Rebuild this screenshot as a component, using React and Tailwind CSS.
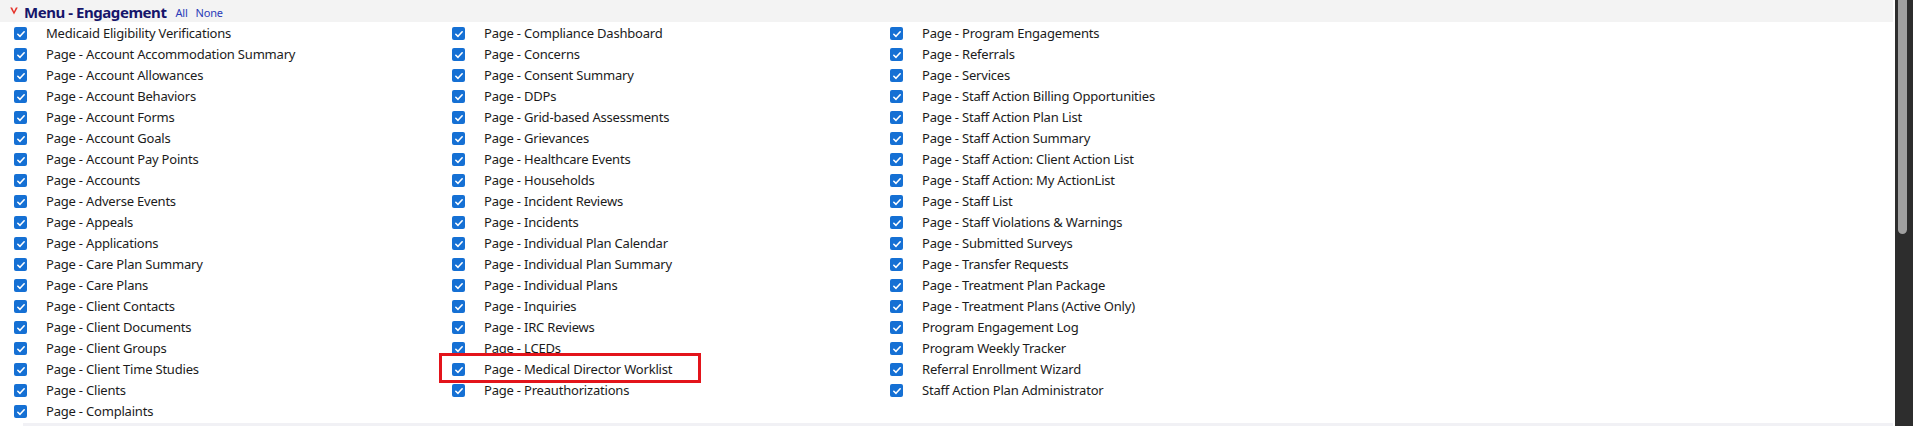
import React from "react";

const columns = [
  [
    "Medicaid Eligibility Verifications",
    "Page - Account Accommodation Summary",
    "Page - Account Allowances",
    "Page - Account Behaviors",
    "Page - Account Forms",
    "Page - Account Goals",
    "Page - Account Pay Points",
    "Page - Accounts",
    "Page - Adverse Events",
    "Page - Appeals",
    "Page - Applications",
    "Page - Care Plan Summary",
    "Page - Care Plans",
    "Page - Client Contacts",
    "Page - Client Documents",
    "Page - Client Groups",
    "Page - Client Time Studies",
    "Page - Clients",
    "Page - Complaints",
  ],
  [
    "Page - Compliance Dashboard",
    "Page - Concerns",
    "Page - Consent Summary",
    "Page - DDPs",
    "Page - Grid-based Assessments",
    "Page - Grievances",
    "Page - Healthcare Events",
    "Page - Households",
    "Page - Incident Reviews",
    "Page - Incidents",
    "Page - Individual Plan Calendar",
    "Page - Individual Plan Summary",
    "Page - Individual Plans",
    "Page - Inquiries",
    "Page - IRC Reviews",
    "Page - LCEDs",
    "Page - Medical Director Worklist",
    "Page - Preauthorizations",
  ],
  [
    "Page - Program Engagements",
    "Page - Referrals",
    "Page - Services",
    "Page - Staff Action Billing Opportunities",
    "Page - Staff Action Plan List",
    "Page - Staff Action Summary",
    "Page - Staff Action: Client Action List",
    "Page - Staff Action: My ActionList",
    "Page - Staff List",
    "Page - Staff Violations & Warnings",
    "Page - Submitted Surveys",
    "Page - Transfer Requests",
    "Page - Treatment Plan Package",
    "Page - Treatment Plans (Active Only)",
    "Program Engagement Log",
    "Program Weekly Tracker",
    "Referral Enrollment Wizard",
    "Staff Action Plan Administrator",
  ],
];

const HIGHLIGHT = "Page - Medical Director Worklist";

function Check() {
  return (
    <span className="flex h-[13px] w-[13px] shrink-0 items-center justify-center rounded-[2px] bg-[#1570d4]">
      <svg viewBox="0 0 12 12" className="h-[10px] w-[10px]" fill="none">
        <path d="M2.2 6.3 L4.8 8.8 L9.8 3.4" stroke="#fff" strokeWidth="1.9" strokeLinecap="round" strokeLinejoin="round" />
      </svg>
    </span>
  );
}

function Row({ label }) {
  return (
    <div className="relative flex h-[21px] items-center">
      <Check />
      <span className="ml-[19px] whitespace-nowrap text-[13px] leading-none tracking-[-0.2px] text-[#1b1b1b]">{label}</span>
      {label === HIGHLIGHT && (
        <div className="pointer-events-none absolute left-[-13px] top-[-6px] h-[30px] w-[262px] border-[3px] border-[#e3141b]" />
      )}
    </div>
  );
}

export default function App() {
  return (
    <div className="flex h-[426px] w-[1913px] overflow-hidden bg-white" style={{ fontFamily: '"Segoe UI", "Noto Sans", "Open Sans", sans-serif' }}>
      <div className="flex min-w-0 flex-1 flex-col">
        <div className="flex h-[22px] w-[1893px] items-center bg-[#f3f3f3] pl-[10px] pt-[2px]">
          <svg viewBox="0 0 8 8" className="mt-[-2px] h-[8px] w-[8px]">
            <path d="M0.2 0.6 L4 7.6 L7.8 0.6 L5.9 0.6 L4 4.4 L2.1 0.6 Z" fill="#e5332a" />
          </svg>
          <span className="ml-[6px] text-[15px] font-bold leading-none tracking-[-0.45px] text-[#16166b]">Menu - Engagement</span>
          <span className="ml-[9px] text-[11px] leading-none tracking-[-0.2px] text-[#2a3ab8]">All</span>
          <span className="ml-[8px] text-[11px] leading-none tracking-[-0.2px] text-[#2a3ab8]">None</span>
        </div>
        <div className="flex flex-1 pl-[14px] pt-[1px]">
          {columns.map((col, i) => (
            <div key={i} className="flex w-[438px] flex-col">
              {col.map((label) => (
                <Row key={label} label={label} />
              ))}
            </div>
          ))}
        </div>
        <div className="ml-[23px] h-[3px] w-[1870px] bg-[#f1f1f5]" />
      </div>
      <div className="relative w-[18px] shrink-0 bg-[#2d2d2d]">
        <div className="absolute left-[3px] top-0 h-[234px] w-[9px] rounded-b-[5px] bg-[#a0a0a0]" />
      </div>
    </div>
  );
}
